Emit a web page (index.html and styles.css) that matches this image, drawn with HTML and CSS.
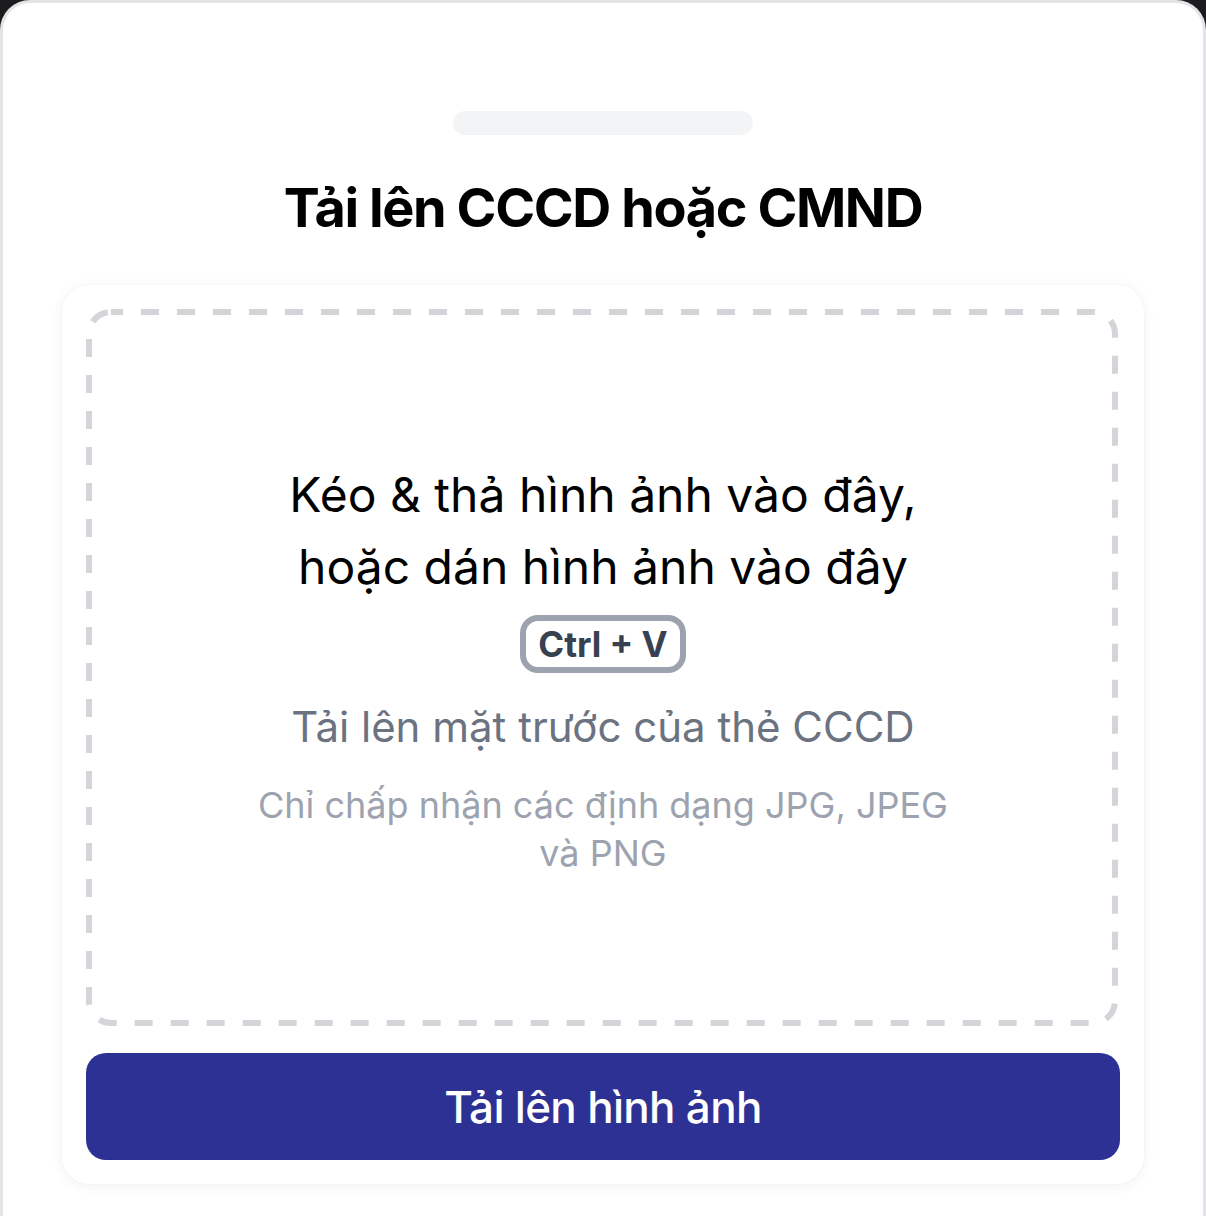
FILE: index.html
```html
<!DOCTYPE html>
<html lang="vi">
<head>
<meta charset="utf-8">
<title>Tải lên CCCD hoặc CMND</title>
<link rel="stylesheet" href="styles.css">
</head>
<body>
  <div class="sheet">
    <div class="handle"></div>
    <h1 class="title">Tải lên CCCD hoặc CMND</h1>

    <div class="card">
      <div class="dropzone">
        <!-- dashed outline drawn as SVG to control dash length -->
        <svg class="dropzone-outline" width="1032" height="717" aria-hidden="true">
          <rect x="3" y="3" width="1026" height="711" rx="22" ry="22"
                fill="none" stroke="#d4d5d8" stroke-width="6"
                stroke-dasharray="18 18" stroke-dashoffset="6"/>
        </svg>
        <p class="drop-text">Kéo &amp; thả hình ảnh vào đây,<br>hoặc dán hình ảnh vào đây</p>
        <span class="kbd">Ctrl + V</span>
        <p class="hint">Tải lên mặt trước của thẻ CCCD</p>
        <p class="formats">Chỉ chấp nhận các định dạng JPG, JPEG và PNG</p>
      </div>
      <button class="upload-btn" type="button">Tải lên hình ảnh</button>
    </div>
  </div>
</body>
</html>
```

FILE: styles.css
```css
* {
  box-sizing: border-box;
}

html,
body {
  margin: 0;
  padding: 0;
  background: #1c1c1e;
  font-family: Inter, "Noto Sans", "Liberation Sans", sans-serif;
}

.sheet {
  min-height: 1216px;
  background: #ffffff;
  border: 3px solid #e4e4e7;
  border-bottom: none;
  border-radius: 30px 30px 0 0;
  padding: 0 59px;
  display: flex;
  flex-direction: column;
  align-items: center;
}

.handle {
  width: 300px;
  height: 24px;
  border-radius: 12px;
  background: #f3f4f6;
  margin-top: 108px;
}

.title {
  margin: 31px 0 0;
  font-size: 54px;
  line-height: 84px;
  font-weight: 700;
  letter-spacing: -1.4px;
  color: #000000;
  text-align: center;
}

.card {
  width: 100%;
  margin-top: 35px;
  background: #ffffff;
  border-radius: 27px;
  padding: 24px;
  box-shadow: 0 2px 14px rgba(0, 0, 0, 0.06), 0 0 0 1px rgba(0, 0, 0, 0.015);
  display: flex;
  flex-direction: column;
}

.dropzone {
  position: relative;
  height: 717px;
  display: flex;
  flex-direction: column;
  align-items: center;
  justify-content: center;
  text-align: center;
}

.dropzone-outline {
  position: absolute;
  top: 0;
  left: 0;
  pointer-events: none;
}

.drop-text {
  margin: 0;
  font-size: 48px;
  line-height: 72px;
  color: #000000;
}

.kbd {
  margin-top: 12px;
  display: inline-block;
  border: 6px solid #9ca3af;
  border-radius: 18px;
  padding: 0 12px;
  height: 58px;
  font-size: 35px;
  line-height: 46px;
  font-weight: 700;
  color: #374151;
}

.hint {
  margin: 24px 0 0;
  font-size: 42px;
  line-height: 60px;
  color: #6b7280;
}

.formats {
  margin: 24px 0 0;
  max-width: 720px;
  font-size: 36px;
  line-height: 48px;
  color: #9ca3af;
}

.upload-btn {
  margin-top: 27px;
  height: 107px;
  border: none;
  border-radius: 20px;
  background: #2e3194;
  color: #ffffff;
  font-family: inherit;
  font-size: 44px;
  font-weight: 500;
  letter-spacing: -0.7px;
  cursor: pointer;
}
```
